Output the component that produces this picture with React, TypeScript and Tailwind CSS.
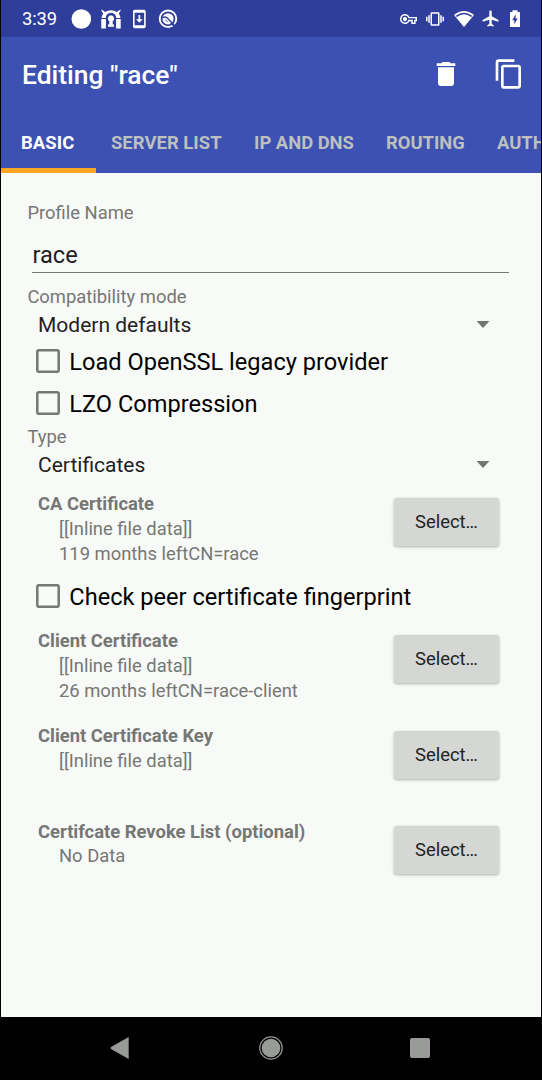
import type { ReactNode } from "react";

function StatusBar() {
  return (
    <div className="flex h-[37px] shrink-0 items-center bg-[#2e3e9a] pl-[21px] pr-[18px] text-white">
      <span className="w-[49px] text-[18.4px] leading-[37px] tracking-[-0.1px]">3:39</span>
      <svg className="size-[20px]" viewBox="0 0 20 20" fill="#fff">
        <circle cx="10.3" cy="10" r="9.8" />
      </svg>
      <svg className="ml-[10px] h-[20px] w-[20px]" viewBox="0 0 20 20" fill="#fff">
        <path d="M0 .7 1.500 1 4 3Q10 -.3 16 3L18.500 1 20 .7 17.800 4.800Q19.300 6.500 19.500 9H15.300A5.300 5.300 0 0 0 4.700 9H.5Q.7 6.500 2.200 4.800Z" />
        <path d="M.3 10H4.900V19.500H.3ZM15.100 10H19.700V19.500H15.100Z" />
        <path d="M10 6.200a3.300 3.300 0 0 1 1.700 6V15.500H13v2.200H7v-2.200h1.300v-3.300a3.300 3.300 0 0 1 1.700-6Z" />
      </svg>
      <svg className="ml-[12px] h-[20px] w-[14px]" viewBox="0 0 14 20">
        <path fill="#fff" fillRule="evenodd" d="M1.600 .8h9.500a1.600 1.600 0 0 1 1.600 1.600v15.200a1.600 1.600 0 0 1-1.600 1.600H1.600A1.600 1.600 0 0 1 0 17.600V2.400A1.600 1.600 0 0 1 1.600 .8ZM1.600 3.700v12.600h9.500V3.700Z" />
        <path fill="#fff" d="M5.500 6h1.700v4.300h2.500L6.350 13.800 3 10.300H5.500Z" />
      </svg>
      <svg className="ml-[11px] size-[20px]" viewBox="0 0 20 20" fill="none">
        <circle cx="10" cy="9.800" r="8.300" stroke="#fff" strokeWidth="1.900" />
        <circle cx="10" cy="9.800" r="5.600" fill="#fff" />
        <path d="M4 9Q7.500 6.700 9.800 9.500L16.800 16.800" stroke="#2e3e9a" strokeWidth="1.300" />
        <path d="M7.300 10.800 9.600 12.800" stroke="#2e3e9a" strokeWidth="1" />
        <path d="m12.800 13.800 3.300 3.300" stroke="#2e3e9a" strokeWidth="1.600" />
      </svg>
      <div className="ml-auto flex items-center">
        <svg className="h-[10px] w-[17px]" viewBox="0 5 24 14" fill="#fff">
          <path d="M22 19h-6v-4h-2.700c-1.100 2.400-3.600 4-6.300 4-3.900 0-7-3.100-7-7s3.100-7 7-7c2.700 0 5.200 1.600 6.300 4H24v6h-2v4Zm-4-2h2v-4h2v-2H11.900l-.2-.7C11 8.300 9.100 7 7 7c-2.800 0-5 2.200-5 5s2.200 5 5 5c2.100 0 4-1.300 4.700-3.300l.2-.7H18v4ZM7 15c-1.700 0-3-1.300-3-3s1.300-3 3-3 3 1.300 3 3-1.300 3-3 3Z" />
        </svg>
        <svg className="ml-[8.700px] size-[18px]" viewBox="0 0 24 24" fill="#fff">
          <path d="M0 15h2V9H0v6zm3 2h2V7H3v10zm19-8v6h2V9h-2zm-3 8h2V7h-2v10zM16.500 3h-9C6.670 3 6 3.670 6 4.500v15c0 .83.67 1.500 1.500 1.500h9c.83 0 1.500-.67 1.500-1.500v-15c0-.83-.67-1.500-1.500-1.500zM16 19H8V5h8v14z" />
        </svg>
        <svg className="ml-[10.300px] h-[18px] w-[20px]" viewBox="0 0 20 18">
          <path d="M0 5Q10-3 20 5L10 17Z" fill="#fff" />
          <path d="M2.300 6.400Q10 .4 17.700 6.400" fill="none" stroke="#2e3e9a" strokeWidth="1.500" />
        </svg>
        <svg className="-mt-px ml-[6.500px] size-[19px]" viewBox="0 0 24 24" fill="#fff">
          <path d="M22 16v-2l-8.500-5V3.500c0-.83-.67-1.500-1.500-1.500s-1.500.67-1.500 1.500V9L2 14v2l8.500-2.500V19L8 20.500V22l4-1 4 1v-1.500L13.500 19v-5.500L22 16z" />
        </svg>
        <svg className="ml-[7.500px] h-[20px] w-[16px]" viewBox="0 0 16 20">
          <path fill="#fff" fillRule="evenodd" d="M3 3h2.500V1.300h5V3H13v15H3ZM8.600 5.200 5.300 11.200h2v4.100L10.700 9.500H8.600Z" />
        </svg>
      </div>
    </div>
  );
}

function Header() {
  return (
    <header className="flex h-[136px] shrink-0 flex-col bg-[#3d51b2]">
      <div className="flex h-[73px] items-center pl-[21px] pr-[16px] text-white">
        <h1 className="pt-[3px] text-[26.400px] font-medium leading-[73px]">Editing "race"</h1>
        <svg className="ml-auto size-[32px]" viewBox="0 0 24 24" fill="#fff">
          <path d="M6 19c0 1.100.9 2 2 2h8c1.100 0 2-.9 2-2V7H6v12zM19 4h-3.500l-1-1h-5l-1 1H5v2h14V4z" />
        </svg>
        <svg className="ml-[31px] size-[32px]" viewBox="0 0 24 24" fill="#fff">
          <path d="M16 1H4c-1.100 0-2 .9-2 2v14h2V3h12V1zm3 4H8c-1.100 0-2 .9-2 2v14c0 1.100.9 2 2 2h11c1.100 0 2-.9 2-2V7c0-1.100-.9-2-2-2zm0 16H8V7h11v14z" />
        </svg>
      </div>
      <nav className="flex h-[63px] overflow-hidden whitespace-nowrap text-[18.400px] font-bold leading-[66px] text-[#bcc0bf]">
        <span className="w-[94.500px] shrink-0 border-b-[5px] border-[#fea621] pl-[20px] tracking-[0.1px] text-white">BASIC</span>
        <span className="w-[143.500px] shrink-0 pl-[15.500px] tracking-[0.050px]">SERVER LIST</span>
        <span className="w-[132px] shrink-0 pl-[15px]">IP AND DNS</span>
        <span className="w-[111px] shrink-0 pl-[15px]">ROUTING</span>
        <span className="shrink-0 pl-[15px]">AUTHENTICATION</span>
      </nav>
    </header>
  );
}

function Label({ children }: { children: ReactNode }) {
  return <div className="h-[24px] pl-[26.400px] text-[18.400px] leading-[24px] text-[#757775]">{children}</div>;
}

function Dropdown({ children }: { children: ReactNode }) {
  return (
    <div className="flex h-[32px] items-center justify-between pl-[37px] pr-[51px] text-[21px] leading-[32px] text-[#1f211f]">
      <span>{children}</span>
      <svg className="-mt-[2px] h-[7px] w-[14px]" viewBox="0 0 14 7" fill="#737573">
        <path d="M.5 0h13L7 7Z" />
      </svg>
    </div>
  );
}

function Check({ children }: { children: ReactNode }) {
  return (
    <div className="flex h-[42px] items-center pl-[35px] text-[23.600px] text-black">
      <svg className="-mt-[2px] size-[24px]" viewBox="0 0 24 24" fill="none" stroke="#767876">
        <rect x="1.300" y="1.300" width="21.400" height="21.400" rx="1.600" strokeWidth="2.500" />
      </svg>
      <span className="ml-[9.300px] leading-[42px]">{children}</span>
    </div>
  );
}

function FileRow({ title, lines }: { title: string; lines: string[] }) {
  return (
    <div className="flex h-[95.300px] justify-between pl-[37px] pr-[42px]">
      <div className="text-[18.400px] leading-[24.800px] text-[#757775]">
        <div className="font-bold">{title}</div>
        {lines.map((line) => (
          <div key={line} className="pl-[21px]">{line}</div>
        ))}
      </div>
      <button className="mt-[6.300px] h-[48px] w-[105px] rounded-[3px] bg-[#d5d7d4] text-[18.400px] leading-[48px] text-[#222422] shadow-[0_1px_3px_rgba(0,0,0,0.3)]">
        Select…
      </button>
    </div>
  );
}

export default function App() {
  return (
    <div className="h-[1080px] w-[542px] bg-black px-px font-[Roboto,sans-serif]">
      <div className="flex h-full flex-col overflow-hidden">
        <StatusBar />
        <Header />
        <main className="h-[844px] shrink-0 bg-[#f8faf7] pt-[28px]">
          <Label>Profile Name</Label>
          <div className="ml-[31px] mr-[32px] mb-[12px] mt-[13px] h-[35px] border-b border-[#777977] pl-[0.500px] text-[23.600px] leading-[34px] text-[#1f211f]">race</div>
          <Label>Compatibility mode</Label>
          <Dropdown>Modern defaults</Dropdown>
          <Check>Load OpenSSL legacy provider</Check>
          <Check>LZO Compression</Check>
          <Label>Type</Label>
          <Dropdown>Certificates</Dropdown>
          <div className="mt-[11px] h-[84px]">
            <FileRow title="CA Certificate" lines={["[[Inline file data]]", "119 months leftCN=race"]} />
          </div>
          <Check>Check peer certificate fingerprint</Check>
          <div className="mt-[11px]">
            <FileRow title="Client Certificate" lines={["[[Inline file data]]", "26 months leftCN=race-client"]} />
            <FileRow title="Client Certificate Key" lines={["[[Inline file data]]"]} />
            <FileRow title="Certifcate Revoke List (optional)" lines={["No Data"]} />
          </div>
        </main>
        <nav className="flex h-[63px] shrink-0 items-center">
          <svg className="-mt-px ml-[109px] h-[22px] w-[19px]" viewBox="0 0 19 22" fill="#999b98">
            <path d="M18.700 0v22L1 12Q0 11 1 10Z" />
          </svg>
          <svg className="-mt-px ml-[130px] size-[24px]" viewBox="0 0 24 24">
            <circle cx="12" cy="12" r="11.200" fill="none" stroke="#999b98" strokeWidth="1.200" />
            <circle cx="12" cy="12" r="9.300" fill="#999b98" />
          </svg>
          <div className="-mt-px ml-[127px] size-[20px] rounded-[2px] bg-[#999b98]" />
        </nav>
      </div>
    </div>
  );
}
